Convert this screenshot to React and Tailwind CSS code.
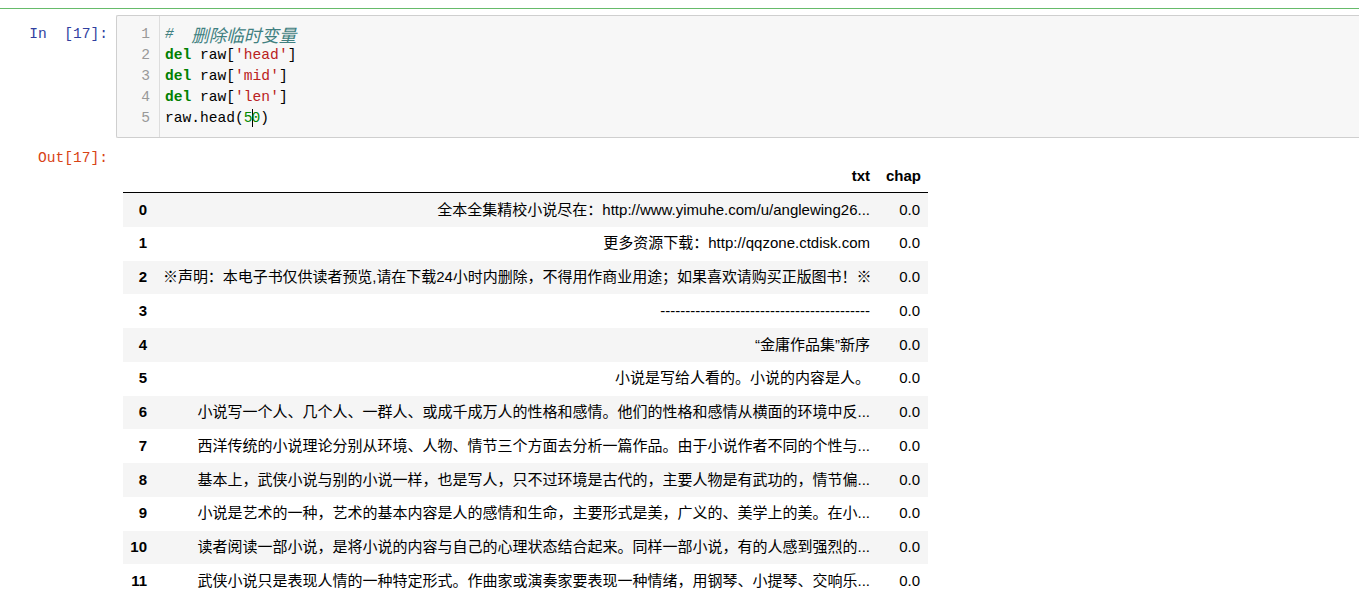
import React from "react";

const rows = [
  "全本全集精校小说尽在：http://www.yimuhe.com/u/anglewing26...",
  "更多资源下载：http://qqzone.ctdisk.com",
  "※声明：本电子书仅供读者预览,请在下载24小时内删除，不得用作商业用途；如果喜欢请购买正版图书！※",
  "------------------------------------------",
  "“金庸作品集”新序",
  "小说是写给人看的。小说的内容是人。",
  "小说写一个人、几个人、一群人、或成千成万人的性格和感情。他们的性格和感情从横面的环境中反...",
  "西洋传统的小说理论分别从环境、人物、情节三个方面去分析一篇作品。由于小说作者不同的个性与...",
  "基本上，武侠小说与别的小说一样，也是写人，只不过环境是古代的，主要人物是有武功的，情节偏...",
  "小说是艺术的一种，艺术的基本内容是人的感情和生命，主要形式是美，广义的、美学上的美。在小...",
  "读者阅读一部小说，是将小说的内容与自己的心理状态结合起来。同样一部小说，有的人感到强烈的...",
  "武侠小说只是表现人情的一种特定形式。作曲家或演奏家要表现一种情绪，用钢琴、小提琴、交响乐...",
];

const mono = "font-['Liberation_Mono','Noto_Sans_CJK_SC',monospace] text-[14.6px]";

function DelLine({ name }) {
  return (
    <div className="h-[21px]">
      <span className="font-bold text-[#008000]">del</span> raw[
      <span className="text-[#ba2121]">'{name}'</span>]
    </div>
  );
}

export default function App() {
  return (
    <div className="min-h-screen bg-white text-black">
      <div className="h-px bg-[#66bb6a] mt-2" />

      {/* input cell */}
      <div className="flex pt-[6px]">
        <div className={`w-[108px] shrink-0 text-right pt-[9px] leading-[21px] whitespace-pre text-[#303f9f] ${mono}`}>
          {"In  [17]:"}
        </div>
        <div className="ml-2 flex-1 flex border border-r-0 border-[#cfcfcf] rounded-l-[2px] bg-[#f7f7f7]">
          <div className={`w-[43px] border-r border-[#dddddd] py-2 pr-[9px] text-right leading-[21px] text-[#999999] ${mono}`}>
            <div className="h-[21px]">1</div>
            <div className="h-[21px]">2</div>
            <div className="h-[21px]">3</div>
            <div className="h-[21px]">4</div>
            <div className="h-[21px]">5</div>
          </div>
          <div className={`pl-[5px] py-2 leading-[21px] whitespace-pre ${mono}`}>
            <div className="h-[21px] overflow-visible italic text-[#408080]">
              {"#  "}
              <span className="text-[17.5px] leading-[21px] inline-block align-top font-['Noto_Sans_CJK_SC',sans-serif]">删除临时变量</span>
            </div>
            <DelLine name="head" />
            <DelLine name="mid" />
            <DelLine name="len" />
            <div className="h-[21px]">
              raw.head(<span className="text-[#008800]">5</span>
              <span className="inline-block w-px h-[18px] bg-black align-middle -mx-px" />
              <span className="text-[#008800]">0</span>)
            </div>
          </div>
        </div>
      </div>

      {/* output cell */}
      <div className="flex mt-[11px]">
        <div className={`w-[108px] shrink-0 text-right leading-[18px] text-[#d84315] ${mono}`}>Out[17]:</div>
        <div className="ml-[15px] mt-[12px] w-[805px] text-[15px] font-['Liberation_Sans','Noto_Sans_CJK_SC',sans-serif]">
          <div className="flex items-center h-[31px] border-b border-black box-content font-bold">
            <div className="w-[32px]" />
            <div className="w-[723px] px-2 text-right">txt</div>
            <div className="w-[50px] px-2 text-right">chap</div>
          </div>
          {rows.map((t, i) => (
            <div key={i} className={`flex items-center h-[33.75px] ${i % 2 === 0 ? "bg-[#f5f5f5]" : "bg-white"}`}>
              <div className="w-[32px] pr-2 text-right font-bold">{i}</div>
              <div className={`w-[723px] px-2 text-right whitespace-nowrap overflow-hidden ${i === 2 ? "tracking-[-0.05px]" : ""}`}>{t}</div>
              <div className="w-[50px] px-2 text-right">0.0</div>
            </div>
          ))}
        </div>
      </div>
    </div>
  );
}
